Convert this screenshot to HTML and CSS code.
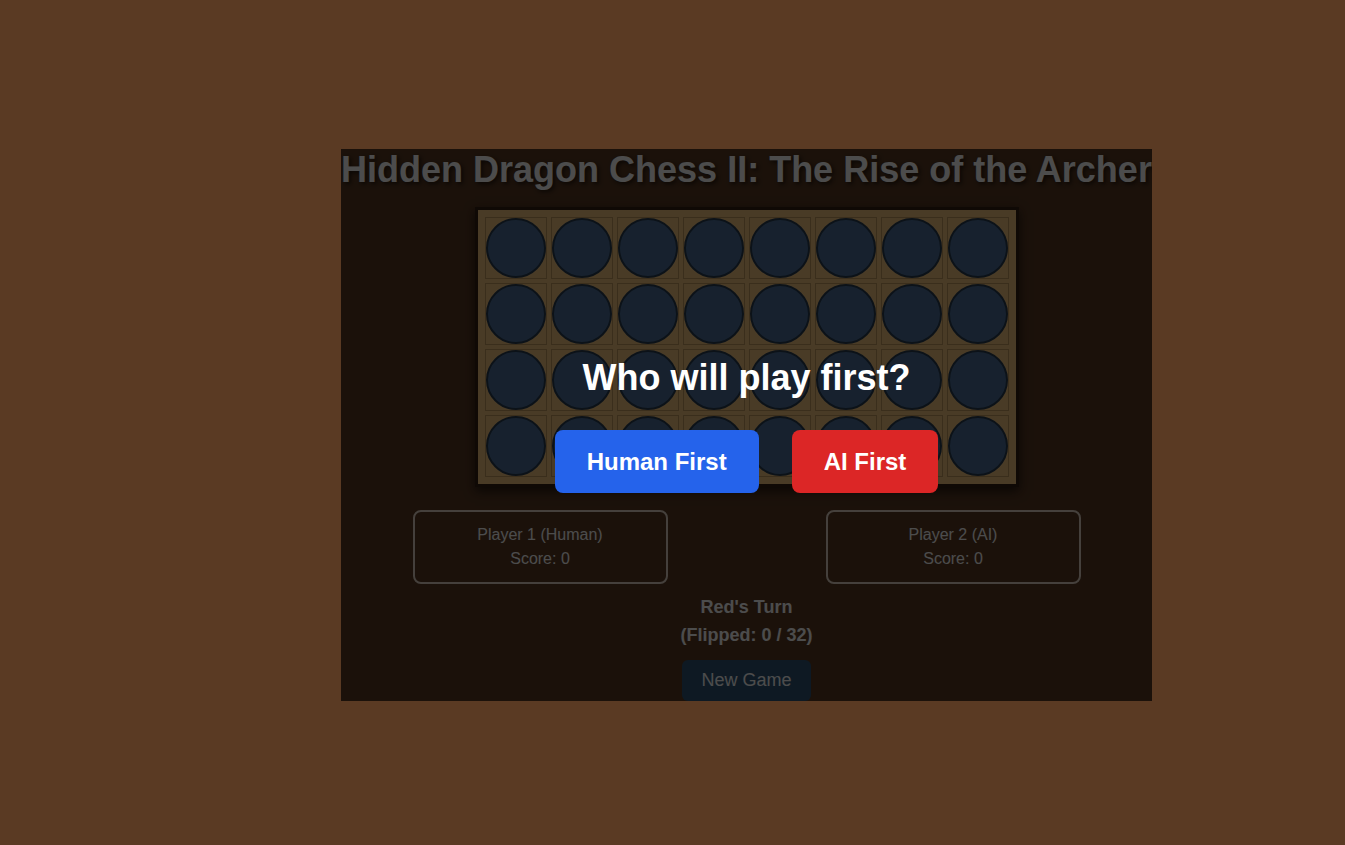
FILE: index.html
```html
<!DOCTYPE html>
<html>
<head>
<meta charset="utf-8">
<title>Hidden Dragon Chess II</title>
<link rel="stylesheet" href="styles.css">
</head>
<body>
<div class="game">
  <h1 class="title">Hidden Dragon Chess II: The Rise of the Archer</h1>
  <div class="board">
    <div class="cell"><span class="piece"></span></div><div class="cell"><span class="piece"></span></div><div class="cell"><span class="piece"></span></div><div class="cell"><span class="piece"></span></div><div class="cell"><span class="piece"></span></div><div class="cell"><span class="piece"></span></div><div class="cell"><span class="piece"></span></div><div class="cell"><span class="piece"></span></div>
    <div class="cell"><span class="piece"></span></div><div class="cell"><span class="piece"></span></div><div class="cell"><span class="piece"></span></div><div class="cell"><span class="piece"></span></div><div class="cell"><span class="piece"></span></div><div class="cell"><span class="piece"></span></div><div class="cell"><span class="piece"></span></div><div class="cell"><span class="piece"></span></div>
    <div class="cell"><span class="piece"></span></div><div class="cell"><span class="piece"></span></div><div class="cell"><span class="piece"></span></div><div class="cell"><span class="piece"></span></div><div class="cell"><span class="piece"></span></div><div class="cell"><span class="piece"></span></div><div class="cell"><span class="piece"></span></div><div class="cell"><span class="piece"></span></div>
    <div class="cell"><span class="piece"></span></div><div class="cell"><span class="piece"></span></div><div class="cell"><span class="piece"></span></div><div class="cell"><span class="piece"></span></div><div class="cell"><span class="piece"></span></div><div class="cell"><span class="piece"></span></div><div class="cell"><span class="piece"></span></div><div class="cell"><span class="piece"></span></div>
  </div>
  <div class="players">
    <div class="player">
      <div>Player 1 (Human)</div>
      <div>Score: 0</div>
    </div>
    <div class="player">
      <div>Player 2 (AI)</div>
      <div>Score: 0</div>
    </div>
  </div>
  <div class="status">
    <div>Red's Turn</div>
    <div>(Flipped: 0 / 32)</div>
  </div>
  <button class="new-game">New Game</button>

  <div class="overlay">
    <h2 class="prompt">Who will play first?</h2>
    <div class="choices">
      <button class="choice human">Human First</button>
      <button class="choice ai">AI First</button>
    </div>
  </div>
</div>
</body>
</html>
```
FILE: styles.css
```css
html, body {
  margin: 0;
  padding: 0;
}
body {
  background: #5a3a23;
  font-family: "Liberation Sans", Arial, sans-serif;
  min-height: 845px;
}
.game {
  position: relative;
  width: 811px;
  height: 552px;
  margin: 149px 0 0 341px;
  overflow: hidden;
  display: flex;
  flex-direction: column;
  align-items: center;
}
.title {
  margin: 0;
  font-size: 36px;
  line-height: 41px;
  font-weight: bold;
  color: #ffffff;
  white-space: nowrap;
  text-shadow: 2px 2px 4px rgba(0,0,0,0.6);
}
.board {
  margin-top: 17px;
  display: grid;
  grid-template-columns: repeat(8, 62px);
  grid-auto-rows: 62px;
  gap: 4px;
  padding: 7px;
  border: 3px solid #321f12;
  background: #f5c680;
  box-shadow: 0 4px 10px rgba(0,0,0,0.6);
}
.cell {
  border: 1px solid #c49a5e;
  display: flex;
  align-items: center;
  justify-content: center;
}
.piece {
  width: 60px;
  height: 60px;
  box-sizing: border-box;
  border-radius: 50%;
  background: #4d719c;
  border: 2px solid #2a3d52;
}
.players {
  margin-top: 23px;
  display: flex;
  gap: 158px;
}
.player {
  width: 255px;
  box-sizing: border-box;
  border: 2px solid #e8d8c8;
  border-radius: 8px;
  padding: 11px 10px;
  text-align: center;
  font-size: 16px;
  line-height: 24px;
  color: #ffffff;
}
.status {
  margin-top: 9px;
  text-align: center;
  font-size: 18px;
  font-weight: bold;
  line-height: 28px;
  color: #ffffff;
}
.new-game {
  margin-top: 11px;
  padding: 10px 19px;
  font-family: "Liberation Sans", Arial, sans-serif;
  font-size: 18px;
  line-height: 21px;
  color: #ffffff;
  background: #2f5677;
  border: none;
  border-radius: 6px;
  flex-shrink: 0;
}
.overlay {
  position: absolute;
  inset: 0;
  background: rgba(0,0,0,0.7);
  display: flex;
  flex-direction: column;
  align-items: center;
  justify-content: center;
}
.prompt {
  margin: 0 0 32px;
  font-size: 36px;
  line-height: 41px;
  font-weight: bold;
  color: #ffffff;
}
.choices {
  display: flex;
  gap: 33px;
}
.choice {
  padding: 18px 32px;
  font-family: "Liberation Sans", Arial, sans-serif;
  font-size: 24px;
  line-height: 27px;
  font-weight: bold;
  color: #ffffff;
  border: none;
  border-radius: 8px;
}
.human {
  background: #2563eb;
}
.ai {
  background: #dc2626;
}
```
